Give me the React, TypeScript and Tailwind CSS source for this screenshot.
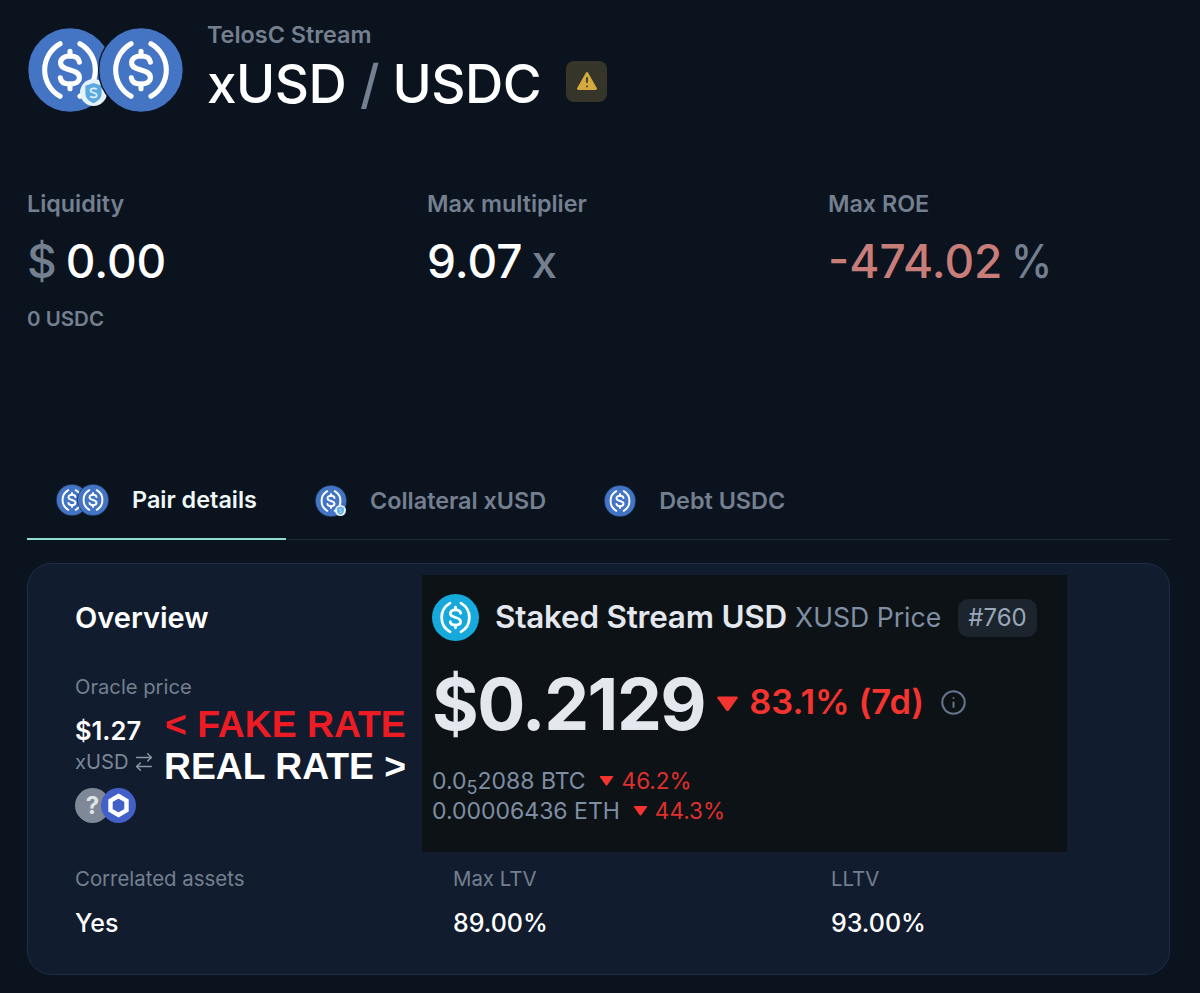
import { ArrowRightLeft, TriangleAlert, Info } from 'lucide-react';

function UsdcIcon({ size, className = '', fill = '#4474c4' }: { size: number; className?: string; fill?: string }) {
  return (
    <svg width={size} height={size} viewBox="0 0 64 64" className={className}>
      <circle cx="32" cy="32" r="31.5" fill={fill} stroke="#0b1420" strokeWidth="1" />
      <path d="M24.6 12.4 A22.5 22.5 0 0 0 24.6 51.6" fill="none" stroke="#fff" strokeWidth="3.8" strokeLinecap="round" />
      <path d="M39.4 12.4 A22.5 22.5 0 0 1 39.4 51.6" fill="none" stroke="#fff" strokeWidth="3.8" strokeLinecap="round" />
      <path
        d="M39 26.2 C38.6 23.2 36 21.6 32 21.6 C27.6 21.6 25 23.6 25 26.6 C25 30 28.4 31 32 32 C35.6 33 39 34 39 37.6 C39 40.6 36.2 42.4 32 42.4 C27.8 42.4 25.2 40.8 24.8 37.8"
        fill="none"
        stroke="#fff"
        strokeWidth="3.8"
        strokeLinecap="round"
      />
      <path d="M32 18 V21.6 M32 42.4 V46" stroke="#fff" strokeWidth="3.8" strokeLinecap="round" />
    </svg>
  );
}

function StreamBadge({ size, className = '' }: { size: number; className?: string }) {
  return (
    <svg width={size} height={size} viewBox="0 0 20 20" className={className}>
      <circle cx="10" cy="10" r="10" fill="#e6f2fa" />
      <path d="M4 5 L10 3 L16 5 L16 11 C16 15 12 17 10 18 C8 17 4 15 4 11 Z" fill="#5aa9e0" />
      <path d="M12.5 7.5 C11 6.5 7.8 6.6 7.8 8.6 C7.8 10.6 12.4 9.8 12.4 12 C12.4 14 9 14 7.6 13" fill="none" stroke="#dff0fb" strokeWidth="1.3" />
    </svg>
  );
}

function TriangleDown({ size }: { size: number }) {
  return (
    <svg width={size} height={size * 0.75} viewBox="0 0 16 12">
      <path d="M1.5 1 H14.5 Q15.6 1 15 2.2 L9 10.6 Q8 11.8 7 10.6 L1 2.2 Q0.4 1 1.5 1 Z" fill="#f6342f" />
    </svg>
  );
}

function Stat({ label, children, sub }: { label: string; children: React.ReactNode; sub?: string }) {
  return (
    <div>
      <div className="text-[23.3px] leading-[28px] font-semibold text-[#74808f]">{label}</div>
      <div className="mt-[15px] h-[56px] text-[46px] leading-[56px] font-medium flex items-baseline gap-[9px]">{children}</div>
      {sub && <div className="mt-[18px] text-[20.5px] leading-[24px] font-semibold text-[#74808f]">{sub}</div>}
    </div>
  );
}

function Field({ label, value }: { label: string; value: string }) {
  return (
    <div>
      <div className="text-[20.4px] leading-[24px] text-[#74808f]">{label}</div>
      <div className="mt-[17px] text-[25px] leading-[30px] font-medium text-white">{value}</div>
    </div>
  );
}

export default function App() {
  return (
    <div className="relative w-[1200px] h-[993px] overflow-hidden bg-[#0b131f] font-['Inter',sans-serif] text-white">
      <div className="pl-[27px] pr-[30px] pt-[27px]">
        {/* header */}
        <div className="flex h-[86px]">
          <div className="relative w-[157px] h-[86px] shrink-0">
            <UsdcIcon size={86} className="absolute left-0 top-0" />
            <StreamBadge size={27} className="absolute left-[53px] top-[52px]" />
            <UsdcIcon size={86} className="absolute left-[71px] top-0" />
          </div>
          <div className="ml-[23px] -mt-[8px]">
            <div className="text-[23.4px] leading-[32px] font-semibold text-[#74808f]">TelosC Stream</div>
            <div className="flex items-center -mt-[1px]">
              <span className="text-[53px] leading-[68px] font-medium tracking-[-0.5px]">
                xUSD <span className="text-[#74808f]">/</span> USDC
              </span>
              <span className="ml-[25px] -mt-[6px] w-[41px] h-[41px] rounded-[8px] bg-[#35352a] flex items-center justify-center">
                <TriangleAlert size={26} fill="#d4a93f" stroke="#35352a" strokeWidth={1.6} />
              </span>
            </div>
          </div>
        </div>

        {/* stats */}
        <div className="mt-[77px] grid grid-cols-[400px_401px_1fr] h-[280px]">
          <Stat label="Liquidity" sub="0 USDC">
            <span className="text-[#74808f]">$</span>
            <span>0.00</span>
          </Stat>
          <Stat label="Max multiplier">
            <span>9.07</span>
            <span className="text-[#74808f]">x</span>
          </Stat>
          <Stat label="Max ROE">
            <span className="text-[#c97d78]">-474.02</span>
            <span className="inline-block origin-left scale-x-[0.9] text-[#74808f]">%</span>
          </Stat>
        </div>

        {/* tabs */}
        <div className="flex h-[70px] border-b border-[#1f2937]">
          <div className="w-[259px] h-[70px] border-b-2 border-[#8fdccb] flex items-center pl-[29px] pb-[8px]">
            <span className="relative w-[53px] h-[32px] shrink-0">
              <UsdcIcon size={32} className="absolute left-0 top-0" />
              <UsdcIcon size={32} className="absolute left-[21px] top-0" />
            </span>
            <span className="ml-[23px] text-[23.4px] font-semibold text-[#eef8f6]">Pair details</span>
          </div>
          <div className="flex items-center pl-[29px] pb-[8px]">
            <span className="relative w-[32px] h-[32px] shrink-0">
              <UsdcIcon size={32} />
              <StreamBadge size={11} className="absolute left-[20px] top-[20px]" />
            </span>
            <span className="ml-[23px] text-[23.4px] font-semibold text-[#74808f]">Collateral xUSD</span>
          </div>
          <div className="flex items-center pl-[58px] pb-[8px]">
            <UsdcIcon size={32} />
            <span className="ml-[23px] text-[23.4px] font-semibold text-[#74808f]">Debt USDC</span>
          </div>
        </div>

        {/* card */}
        <div className="mt-[23px] h-[412px] w-[1143px] rounded-[24px] border border-[#1e2c44] bg-[#111c2e] pl-[47px] pt-[36px]">
          <div className="text-[29px] leading-[36px] font-semibold">Overview</div>
          <div className="mt-[39px] text-[20.2px] leading-[24px] text-[#74808f]">Oracle price</div>
          <div className="mt-[16px] text-[25.5px] leading-[32px] font-semibold">$1.27</div>
          <div className="flex items-center gap-[4px] mt-[3px] text-[20.2px] leading-[24px] text-[#7c8797]">
            xUSD <ArrowRightLeft size={22} strokeWidth={1.6} className="text-[#8d97a5]" />
          </div>
          <div className="relative mt-[14px] h-[35px]">
            <span className="absolute left-0 top-0 w-[35px] h-[35px] rounded-full bg-[#7f8896] flex items-center justify-center text-[24px] font-bold text-[#dfe3e8]">
              ?
            </span>
            <span className="absolute left-[26px] top-0 w-[35px] h-[35px] rounded-full bg-[#4360c9] flex items-center justify-center">
              <svg width="23" height="25" viewBox="0 0 23 25">
                <path d="M11.5 3 L19.5 7.7 V17.3 L11.5 22 L3.5 17.3 V7.7 Z" fill="none" stroke="#fff" strokeWidth="4.4" />
              </svg>
            </span>
          </div>
          <div className="mt-[44px] grid grid-cols-[378px_378px_1fr]">
            <Field label="Correlated assets" value="Yes" />
            <Field label="Max LTV" value="89.00%" />
            <Field label="LLTV" value="93.00%" />
          </div>
        </div>
      </div>

      {/* annotations pasted over the screenshot */}
      <div className="absolute left-[165px] top-[703px] font-['Liberation_Sans',sans-serif] font-bold text-[37.3px] leading-[42px] text-[#ed1c24] whitespace-nowrap">
        &lt; FAKE RATE
      </div>
      <div className="absolute left-[164px] top-[745px] font-['Liberation_Sans',sans-serif] font-bold text-[37.3px] leading-[42px] text-white whitespace-nowrap">
        REAL RATE &gt;
      </div>

      <div className="absolute left-[422px] top-[575px] w-[645px] h-[277px] bg-[#0d1217] pl-[10px] pt-[19px]">
        <div className="flex items-center h-[47px]">
          <svg width="47" height="47" viewBox="0 0 64 64" className="shrink-0">
            <circle cx="32" cy="32" r="32" fill="#16a9dc" />
            <path d="M24.6 12.4 A22.5 22.5 0 0 0 24.6 51.6" fill="none" stroke="#fff" strokeWidth="3.8" strokeLinecap="round" />
            <path d="M39.4 12.4 A22.5 22.5 0 0 1 39.4 51.6" fill="none" stroke="#fff" strokeWidth="3.8" strokeLinecap="round" />
            <path d="M39 26.2 C38.6 23.2 36 21.6 32 21.6 C27.6 21.6 25 23.6 25 26.6 C25 30 28.4 31 32 32 C35.6 33 39 34 39 37.6 C39 40.6 36.2 42.4 32 42.4 C27.8 42.4 25.2 40.8 24.8 37.8" fill="none" stroke="#fff" strokeWidth="3.8" strokeLinecap="round" />
            <path d="M32 18 V21.6 M32 42.4 V46" stroke="#fff" strokeWidth="3.8" strokeLinecap="round" />
          </svg>
          <span className="ml-[16px] text-[31.4px] font-semibold text-[#e4e7ee] tracking-[-0.2px]">Staked Stream USD</span>
          <span className="ml-[8px] text-[26.6px] text-[#7f8ea3]">XUSD Price</span>
          <span className="ml-[17px] h-[38px] px-[10px] rounded-[10px] bg-[#1c242e] flex items-center text-[24px] text-[#9aa7b8]">#760</span>
        </div>
        <div className="flex items-center mt-[28px] h-[70px]">
          <span className="text-[71.4px] leading-[70px] font-bold text-[#e4e7ee] tracking-[-1.5px]">$0.2129</span>
          <span className="ml-[11px]"><TriangleDown size={23} /></span>
          <span className="ml-[10px] -mt-[4px] text-[34.5px] font-semibold text-[#f6342f]">83.1% (7d)</span>
          <Info size={27} strokeWidth={1.8} className="ml-[16px] -mt-[4px] text-[#64748b]" />
        </div>
        <div className="mt-[27px] text-[23px] leading-[30px] text-[#7f8ea3]">
          <div className="flex items-center">
            <span>0.0<sub className="text-[18px] leading-none">5</sub>2088 BTC</span>
            <span className="ml-[13px]"><TriangleDown size={15} /></span>
            <span className="ml-[8px] text-[22.5px] text-[#e0302c]">46.2%</span>
          </div>
          <div className="flex items-center">
            <span>0.00006436 ETH</span>
            <span className="ml-[13px]"><TriangleDown size={15} /></span>
            <span className="ml-[7px] text-[22.5px] text-[#e0302c]">44.3%</span>
          </div>
        </div>
      </div>
    </div>
  );
}
